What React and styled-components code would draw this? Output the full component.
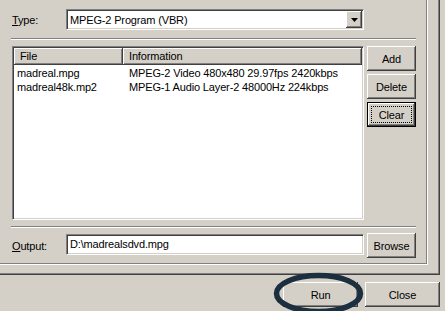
import React from 'react';
import styled, {createGlobalStyle, css} from 'styled-components';

const GlobalStyle = createGlobalStyle`
  body {
    margin: 0;
    background: #d4d0c8;
    font-family: "Liberation Sans", Arial, sans-serif;
    font-size: 11px;
    letter-spacing: -0.15px;
    color: #000;
  }
`;

const raised = css`
  background: #d4d0c8;
  box-shadow: inset -1px -1px 0 #404040, inset 1px 1px 0 #fff,
    inset -2px -2px 0 #808080, inset 2px 2px 0 #d4d0c8;
`;

const sunken = css`
  box-sizing: border-box;
  border: 1px solid;
  border-color: #808080 #fff #fff #808080;
  box-shadow: inset 1px 1px 0 #404040, inset -1px -1px 0 #d4d0c8;
  background: #fff;
`;

const Page = styled.div`
  position: relative;
  width: 445px;
  height: 311px;
  overflow: hidden;
  background: #d4d0c8;
`;

const TabFrame = styled.div`
  box-sizing: border-box;
  width: 440px;
  height: 275px;
  border-right: 1px solid #404040;
  border-bottom: 1px solid #404040;
  box-shadow: inset -1px -1px 0 #808080;
`;

const GroupFrame = styled.div`
  box-sizing: border-box;
  width: 428px;
  height: 265px;
  padding: 9px 0 0 12px;
  border-right: 1px solid #fff;
  border-bottom: 1px solid #fff;
  box-shadow: inset -1px -1px 0 #808080;
`;

const FieldRow = styled.div`
  display: flex;
  align-items: ${({$top}) => ($top ? 'flex-start' : 'center')};
  margin-top: ${({$gap}) => $gap || 0}px;
`;

const Label = styled.label`
  width: 54px;
  align-self: center;
`;

const Combo = styled.div`
  ${sunken};
  display: flex;
  align-items: center;
  width: 298px;
  height: 21px;
  padding: 1px 1px 1px 3px;
`;

const ComboText = styled.span`
  flex: 1;
`;

const DropButton = styled.div`
  ${raised};
  display: flex;
  align-items: center;
  justify-content: center;
  width: 16px;
  height: 17px;
`;

const Edit = styled.div`
  ${sunken};
  width: 298px;
  height: 21px;
  margin-top: 1px;
  padding: 3px 0 0 3px;
`;

const Separator = styled.div`
  width: 405px;
  height: 0;
  margin: ${({$gap}) => $gap}px 0 0 -1px;
  border-top: 1px solid #808080;
  border-bottom: 1px solid #fff;
`;

const ListRow = styled.div`
  display: flex;
  gap: 3px;
  margin-top: 6px;
`;

const ListView = styled.div`
  ${sunken};
  width: 352px;
  height: 174px;
  padding: 1px;
  display: flex;
  flex-direction: column;
`;

const Columns = styled.div`
  display: grid;
  grid-template-columns: 109px 1fr;
`;

const HeaderCell = styled.div`
  ${raised};
  height: 17px;
  line-height: 16px;
  padding-left: 6px;
`;

const Rows = styled.div`
  padding-top: 1px;
`;

const Cell = styled.div`
  line-height: 14px;
  white-space: nowrap;
  padding-left: ${({$first}) => ($first ? 3 : 6)}px;
`;

const ButtonColumn = styled.div`
  display: flex;
  flex-direction: column;
  gap: 3px;
`;

const Button = styled.button`
  ${raised};
  position: relative;
  box-sizing: border-box;
  width: ${({$wide}) => ($wide ? 75 : 49)}px;
  height: 25px;
  margin: 0;
  padding: 0;
  border: none;
  font: inherit;
  letter-spacing: inherit;
  color: #000;
  ${({$default}) =>
    $default &&
    css`
      border: 1px solid #000;
      &::after {
        content: '';
        position: absolute;
        inset: 3px;
        border: 1px dotted #000;
      }
    `}
`;

const BrowseButton = styled(Button)`
  margin-left: 3px;
`;

const BottomBar = styled.div`
  display: flex;
  justify-content: flex-end;
  gap: 7px;
  padding: 7px 5px 0 0;
`;

const Annotation = styled.svg`
  position: absolute;
  left: 270px;
  top: 268px;
`;

const files = [
  {name: 'madreal.mpg', info: 'MPEG-2 Video 480x480 29.97fps 2420kbps'},
  {name: 'madreal48k.mp2', info: 'MPEG-1 Audio Layer-2 48000Hz 224kbps'},
];

const App = () => (
  <Page>
    <GlobalStyle />
    <TabFrame>
      <GroupFrame>
        <FieldRow>
          <Label><u>T</u>ype:</Label>
          <Combo>
            <ComboText>MPEG-2 Program (VBR)</ComboText>
            <DropButton>
              <svg width="7" height="4" viewBox="0 0 7 4">
                <polygon points="0,0 7,0 3.5,4" fill="#000" />
              </svg>
            </DropButton>
          </Combo>
        </FieldRow>
        <Separator $gap={8} />
        <ListRow>
          <ListView>
            <Columns>
              <HeaderCell>File</HeaderCell>
              <HeaderCell>Information</HeaderCell>
            </Columns>
            <Rows>
              {files.map((f) => (
                <Columns key={f.name}>
                  <Cell $first>{f.name}</Cell>
                  <Cell>{f.info}</Cell>
                </Columns>
              ))}
            </Rows>
          </ListView>
          <ButtonColumn>
            <Button>Add</Button>
            <Button>Delete</Button>
            <Button $default>Clear</Button>
          </ButtonColumn>
        </ListRow>
        <Separator $gap={6} />
        <FieldRow $top $gap={5}>
          <Label><u>O</u>utput:</Label>
          <Edit>D:\madrealsdvd.mpg</Edit>
          <BrowseButton>Browse</BrowseButton>
        </FieldRow>
      </GroupFrame>
    </TabFrame>
    <BottomBar>
      <Button $wide>Run</Button>
      <Button $wide>Close</Button>
    </BottomBar>
    <Annotation width="100" height="50" viewBox="0 0 100 50">
      <ellipse cx="48.5" cy="25.5" rx="42" ry="18" fill="none" stroke="#1c2f3e" strokeWidth="5.5" />
    </Annotation>
  </Page>
);

export default App;
